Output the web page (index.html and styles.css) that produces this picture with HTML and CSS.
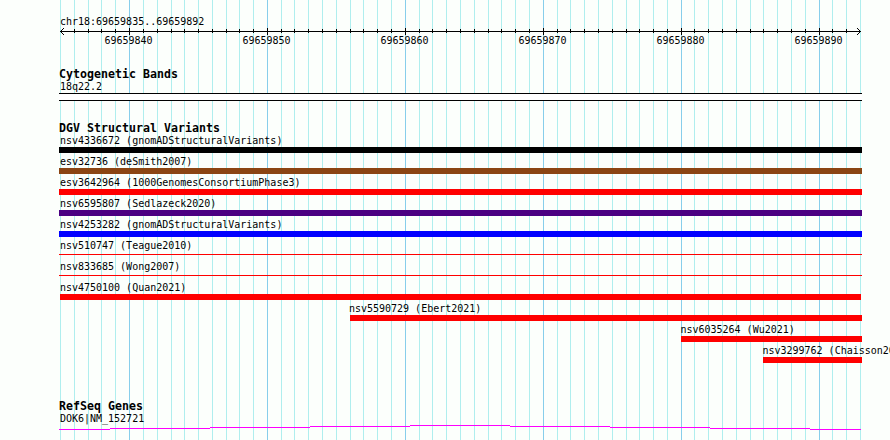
FILE: index.html
```html
<!DOCTYPE html>
<html lang="en">
<head>
<meta charset="utf-8">
<title>chr18:69659835..69659892</title>
<link rel="stylesheet" href="styles.css">
</head>
<body>
<main class="browser">
<svg class="grid" width="890" height="440" shape-rendering="crispEdges" aria-hidden="true">
<path class="minor" d="M60.5 0v440M74.5 0v440M88.5 0v440M101.5 0v440M115.5 0v440M143.5 0v440M157.5 0v440M171.5 0v440M184.5 0v440M198.5 0v440M212.5 0v440M226.5 0v440M239.5 0v440M253.5 0v440M281.5 0v440M294.5 0v440M308.5 0v440M322.5 0v440M336.5 0v440M350.5 0v440M363.5 0v440M377.5 0v440M391.5 0v440M419.5 0v440M432.5 0v440M446.5 0v440M460.5 0v440M474.5 0v440M488.5 0v440M501.5 0v440M515.5 0v440M529.5 0v440M557.5 0v440M570.5 0v440M584.5 0v440M598.5 0v440M612.5 0v440M626.5 0v440M639.5 0v440M653.5 0v440M667.5 0v440M694.5 0v440M708.5 0v440M722.5 0v440M736.5 0v440M750.5 0v440M763.5 0v440M777.5 0v440M791.5 0v440M805.5 0v440M832.5 0v440M846.5 0v440M860.5 0v440"/>
<path class="major" d="M129.5 0v440M267.5 0v440M405.5 0v440M543.5 0v440M681.5 0v440M819.5 0v440"/>
</svg>
<header class="ruler">
<div class="label">chr18:69659835..69659892</div>
<svg class="axis" width="803" height="7" viewBox="59 28 803 7" shape-rendering="crispEdges">
<path d="M60 31.5h801M74.5 29v4M88.5 29v4M101.5 29v4M115.5 29v4M143.5 29v4M157.5 29v4M171.5 29v4M184.5 29v4M198.5 29v4M212.5 29v4M226.5 29v4M239.5 29v4M253.5 29v4M281.5 29v4M294.5 29v4M308.5 29v4M322.5 29v4M336.5 29v4M350.5 29v4M363.5 29v4M377.5 29v4M391.5 29v4M419.5 29v4M432.5 29v4M446.5 29v4M460.5 29v4M474.5 29v4M488.5 29v4M501.5 29v4M515.5 29v4M529.5 29v4M557.5 29v4M570.5 29v4M584.5 29v4M598.5 29v4M612.5 29v4M626.5 29v4M639.5 29v4M653.5 29v4M667.5 29v4M694.5 29v4M708.5 29v4M722.5 29v4M736.5 29v4M750.5 29v4M763.5 29v4M777.5 29v4M791.5 29v4M805.5 29v4M832.5 29v4M846.5 29v4M129.5 28v7M267.5 28v7M405.5 28v7M543.5 28v7M681.5 28v7M819.5 28v7M61 30.5h1M62 29.5h1M63 28.5h1M61 32.5h1M62 33.5h1M63 34.5h1M859 30.5h1M858 29.5h1M857 28.5h1M859 32.5h1M858 33.5h1M857 34.5h1"/>
</svg>
<div class="ticks"><span>69659840</span><span>69659850</span><span>69659860</span><span>69659870</span><span>69659880</span><span>69659890</span></div>
</header>
<section class="track cyto">
<h2>Cytogenetic Bands</h2>
<div class="label">18q22.2</div>
<div class="band"></div>
</section>
<section class="track variants">
<h2>DGV Structural Variants</h2>
<div class="row"><div class="label">nsv4336672 (gnomADStructuralVariants)</div><div class="bar black"></div></div>
<div class="row"><div class="label">esv32736 (deSmith2007)</div><div class="bar brown"></div></div>
<div class="row"><div class="label">esv3642964 (1000GenomesConsortiumPhase3)</div><div class="bar"></div></div>
<div class="row"><div class="label">nsv6595807 (Sedlazeck2020)</div><div class="bar indigo"></div></div>
<div class="row"><div class="label">nsv4253282 (gnomADStructuralVariants)</div><div class="bar blue"></div></div>
<div class="row"><div class="label">nsv510747 (Teague2010)</div><div class="bar thin"></div></div>
<div class="row"><div class="label">nsv833685 (Wong2007)</div><div class="bar thin"></div></div>
<div class="row"><div class="label">nsv4750100 (Quan2021)</div><div class="bar inset"></div></div>
<div class="row ebert"><div class="label">nsv5590729 (Ebert2021)</div><div class="bar"></div></div>
<div class="row wu"><div class="label">nsv6035264 (Wu2021)</div><div class="bar"></div></div>
<div class="row chaisson"><div class="label">nsv3299762 (Chaisson2017)</div><div class="bar"></div></div>
</section>
<section class="track genes">
<h2>RefSeq Genes</h2>
<div class="label">DOK6|NM_152721</div>
<svg class="gene" width="803" height="5" viewBox="59 425 803 5" shape-rendering="crispEdges">
<path d="M59 429.5h51M110 428.5h100M210 427.5h100M310 426.5h100M410 425.5h100M510 426.5h100M610 427.5h100M710 428.5h100M810 429.5h51"/>
</svg>
</section>
</main>
</body>
</html>
```
FILE: styles.css
```css
body {
  margin: 0;
  background: #fcfffc;
  color: #000;
  font: 10px/12px "DejaVu Sans Mono", monospace;
}

.browser {
  position: relative;
  box-sizing: border-box;
  width: 890px;
  height: 440px;
  padding: 15px 28px 0 59px;
  overflow: hidden;
}

.grid {
  position: absolute;
  inset: 0;
  z-index: -1;
}

path { fill: none; stroke-width: 1; }
.minor { stroke: #afeeee; }
.major { stroke: #87ceeb; }
.axis path { stroke: #000; }
.gene path { stroke: #f0f; }
.axis, .gene { display: block; }

.label {
  height: 12px;
  padding-left: 1px;
  line-height: 14px;
  letter-spacing: -0.01px;
  white-space: nowrap;
}

.ruler { height: 53px; }
.ruler .axis { margin-top: 1px; }

.ticks {
  display: grid;
  grid-template-columns: repeat(6, 138px);
  width: 803px;
  padding-left: 45.4px;
  letter-spacing: -0.02px;
}

h2 {
  height: 12px;
  margin: 0;
  font-size: 11.6px;
  line-height: 12px;
  letter-spacing: 0.016px;
}

.cyto { height: 54px; }

.band {
  height: 6px;
  margin-top: 1px;
  border: solid #000;
  border-width: 1px 0;
  background: #fff;
}

.variants { height: 278px; }

.row {
  height: 21px;
}

.bar {
  height: 6px;
  margin-top: 1px;
  background: #f00;
}

.black { background: #000; }
.brown { background: #8b4513; }
.indigo { background: #4b0082; }
.blue { background: #00f; }
.thin { height: 1px; margin-top: 3px; }
.inset { margin-inline: 1px; }
.ebert { margin-left: 291px; }
.wu { margin-left: 622px; }
.chaisson { margin-left: 704px; }
.ebert .label { padding-left: 0; margin-left: -1px; }
.wu .label, .chaisson .label { padding-left: 0; margin-left: -0.5px; }
.genes .gene { margin-top: 1px; }
```
